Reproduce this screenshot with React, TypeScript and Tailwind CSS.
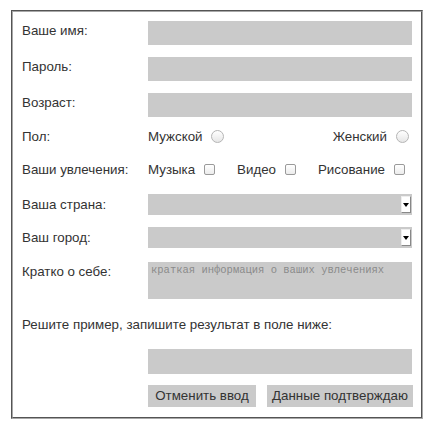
import React from "react";

const label = "w-[126px] shrink-0 leading-5";
const field = "h-6 flex-1 bg-[#cacaca]";

function Radio() {
  return <span className="inline-block size-[13px] rounded-full border border-[#b5b5b5] bg-gradient-to-b from-white to-[#e6e6e6]" />;
}

function Check() {
  return <span className="inline-block size-[11px] rounded-[2px] border border-[#9a9a9a] bg-gradient-to-b from-white to-[#ececec]" />;
}

function Select() {
  return (
    <div className="flex h-[21px] flex-1 items-center justify-end bg-[#cacaca] pr-[1px]">
      <span className="flex h-[17px] w-[10px] items-center justify-center border border-[#888] border-t-[#eee] border-l-[#eee] bg-white">
        <span className="h-0 w-0 border-x-[3px] border-t-[4px] border-x-transparent border-t-black" />
      </span>
    </div>
  );
}

export default function App() {
  return (
    <div className="h-[425px] w-[436px] bg-white pl-[11px] pt-[10px] font-['Liberation_Sans',Arial,sans-serif] text-[13.33px] text-[#333]">
      <div className="flex h-[409px] w-[412px] flex-col border-2 border-[#a8a8a8] px-[9px] pt-[9px] [border-style:groove]">
        <div className="flex items-start">
          <span className={label}>Ваше имя:</span>
          <div className={field} />
        </div>
        <div className="mt-3 flex items-start">
          <span className={label}>Пароль:</span>
          <div className={field} />
        </div>
        <div className="mt-3 flex items-start">
          <span className={label}>Возраст:</span>
          <div className={field} />
        </div>
        <div className="mt-[10px] flex h-5 items-center">
          <span className={label}>Пол:</span>
          <div className="flex flex-1 items-center justify-between pr-[3px]">
            <span className="flex items-center gap-[9px]">Мужской <Radio /></span>
            <span className="flex items-center gap-[9px]">Женский <Radio /></span>
          </div>
        </div>
        <div className="mt-[13px] flex h-5 items-center">
          <span className={label}>Ваши увлечения:</span>
          <div className="flex flex-1 items-center justify-between pr-[7px]">
            <span className="flex items-center gap-[9px]">Музыка <Check /></span>
            <span className="flex items-center gap-[9px]">Видео <Check /></span>
            <span className="flex items-center gap-[9px]">Рисование <Check /></span>
          </div>
        </div>
        <div className="mt-[14px] flex h-[21px] items-center">
          <span className={label}>Ваша страна:</span>
          <Select />
        </div>
        <div className="mt-[12px] flex h-[21px] items-center">
          <span className={label}>Ваш город:</span>
          <Select />
        </div>
        <div className="mt-[14px] flex items-start">
          <span className={label}>Кратко о себе:</span>
          <div className="h-[37px] flex-1 bg-[#cacaca] px-[3px] pt-[1px] font-['Liberation_Mono',monospace] text-[10.5px] leading-[14px] text-[#8a8a8a]">
            краткая информация о ваших увлечениях
          </div>
        </div>
        <div className="mt-4 leading-5">Решите пример, запишите результат в поле ниже:</div>
        <div className="mt-[14px] flex">
          <span className="w-[126px] shrink-0" />
          <div className="h-[25px] flex-1 bg-[#cacaca]" />
        </div>
        <div className="mt-[11px] flex">
          <span className="w-[126px] shrink-0" />
          <div className="flex gap-[11px]">
            <button className="h-[22px] w-[108px] bg-[#cacaca] text-[#333]">Отменить ввод</button>
            <button className="h-[22px] w-[146px] bg-[#cacaca] text-[#333]">Данные подтверждаю</button>
          </div>
        </div>
      </div>
    </div>
  );
}
